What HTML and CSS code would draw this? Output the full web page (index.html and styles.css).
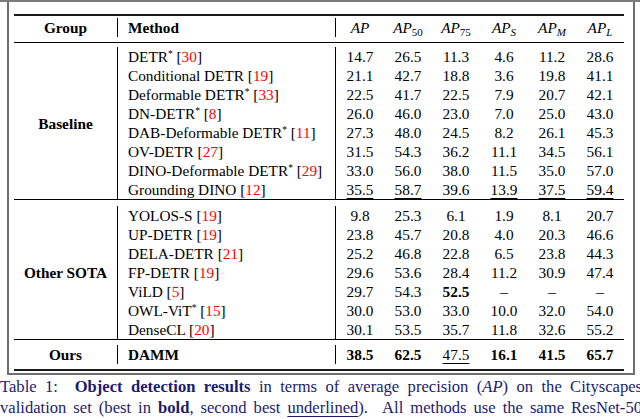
FILE: index.html
```html
<!DOCTYPE html>
<html>
<head>
<meta charset="utf-8">
<link rel="stylesheet" href="styles.css">
</head>
<body>
<div class="topline"></div>
<div class="frame">
  <div class="tbl">
    <div class="rule thick"></div>
    <div class="sec head">
      <div class="grp g1">Group</div>
      <div class="meth">Method</div>
      <div class="vals">
        <span><i>AP</i></span>
        <span><i>AP</i><sub>50</sub></span>
        <span><i>AP</i><sub>75</sub></span>
        <span><i>AP</i><sub><i>S</i></sub></span>
        <span><i>AP</i><sub><i>M</i></sub></span>
        <span><i>AP</i><sub><i>L</i></sub></span>
      </div>
    </div>
    <div class="rule"></div>
    <div class="sec base">
      <div class="grp g8">Baseline</div>
      <div class="meth">DETR<sup>*</sup> [<span class="ref">30</span>]</div>
      <div class="vals"><span>14.7</span><span>26.5</span><span>11.3</span><span>4.6</span><span>11.2</span><span>28.6</span></div>
      <div class="meth">Conditional DETR [<span class="ref">19</span>]</div>
      <div class="vals"><span>21.1</span><span>42.7</span><span>18.8</span><span>3.6</span><span>19.8</span><span>41.1</span></div>
      <div class="meth">Deformable DETR<sup>*</sup> [<span class="ref">33</span>]</div>
      <div class="vals"><span>22.5</span><span>41.7</span><span>22.5</span><span>7.9</span><span>20.7</span><span>42.1</span></div>
      <div class="meth">DN-DETR<sup>*</sup> [<span class="ref">8</span>]</div>
      <div class="vals"><span>26.0</span><span>46.0</span><span>23.0</span><span>7.0</span><span>25.0</span><span>43.0</span></div>
      <div class="meth">DAB-Deformable DETR<sup>*</sup> [<span class="ref">11</span>]</div>
      <div class="vals"><span>27.3</span><span>48.0</span><span>24.5</span><span>8.2</span><span>26.1</span><span>45.3</span></div>
      <div class="meth">OV-DETR [<span class="ref">27</span>]</div>
      <div class="vals"><span>31.5</span><span>54.3</span><span>36.2</span><span>11.1</span><span>34.5</span><span>56.1</span></div>
      <div class="meth">DINO-Deformable DETR<sup>*</sup> [<span class="ref">29</span>]</div>
      <div class="vals"><span>33.0</span><span>56.0</span><span>38.0</span><span>11.5</span><span>35.0</span><span>57.0</span></div>
      <div class="meth">Grounding DINO [<span class="ref">12</span>]</div>
      <div class="vals"><span><u>35.5</u></span><span><u>58.7</u></span><span>39.6</span><span><u>13.9</u></span><span><u>37.5</u></span><span><u>59.4</u></span></div>
    </div>
    <div class="rule"></div>
    <div class="sec other">
      <div class="grp g7">Other SOTA</div>
      <div class="meth">YOLOS-S [<span class="ref">19</span>]</div>
      <div class="vals"><span>9.8</span><span>25.3</span><span>6.1</span><span>1.9</span><span>8.1</span><span>20.7</span></div>
      <div class="meth">UP-DETR [<span class="ref">19</span>]</div>
      <div class="vals"><span>23.8</span><span>45.7</span><span>20.8</span><span>4.0</span><span>20.3</span><span>46.6</span></div>
      <div class="meth">DELA-DETR [<span class="ref">21</span>]</div>
      <div class="vals"><span>25.2</span><span>46.8</span><span>22.8</span><span>6.5</span><span>23.8</span><span>44.3</span></div>
      <div class="meth">FP-DETR [<span class="ref">19</span>]</div>
      <div class="vals"><span>29.6</span><span>53.6</span><span>28.4</span><span>11.2</span><span>30.9</span><span>47.4</span></div>
      <div class="meth">ViLD [<span class="ref">5</span>]</div>
      <div class="vals"><span>29.7</span><span>54.3</span><span><b>52.5</b></span><span>–</span><span>–</span><span>–</span></div>
      <div class="meth">OWL-ViT<sup>*</sup> [<span class="ref">15</span>]</div>
      <div class="vals"><span>30.0</span><span>53.0</span><span>33.0</span><span>10.0</span><span>32.0</span><span>54.0</span></div>
      <div class="meth">DenseCL [<span class="ref">20</span>]</div>
      <div class="vals"><span>30.1</span><span>53.5</span><span>35.7</span><span>11.8</span><span>32.6</span><span>55.2</span></div>
    </div>
    <div class="rule"></div>
    <div class="sec ours">
      <div class="grp g1">Ours</div>
      <div class="meth"><b>DAMM</b></div>
      <div class="vals"><span><b>38.5</b></span><span><b>62.5</b></span><span><u>47.5</u></span><span><b>16.1</b></span><span><b>41.5</b></span><span><b>65.7</b></span></div>
    </div>
    <div class="rule thick"></div>
  </div>
</div>
<div class="cap">
  <div class="cl">Table 1: &nbsp;<b>Object detection results</b> in terms of average precision (<i>AP</i>) on the Cityscapes</div>
  <div class="cl">validation set (best in <b>bold</b>, second best <u>underlined</u>). &nbsp;All methods use the same ResNet-50</div>
</div>
</body>
</html>
```
FILE: styles.css
```css
html, body {
  margin: 0;
  padding: 0;
  background: #fff;
}
body {
  width: 640px;
  height: 419px;
  overflow: hidden;
  font-family: "Liberation Serif", "Times New Roman", serif;
  color: #000;
}
.topline {
  height: 2px;
  background: #7a7a7a;
}
.frame {
  margin-left: 7px;
  width: 624px;
  border: 2px solid #6e6e6e;
  border-top: none;
  padding: 12px 0 2px 0;
}
.tbl {
  margin-left: 5px;
  width: 610px;
  font-size: 15.3px;
}
.rule {
  height: 1px;
  background: #000;
}
.rule.thick {
  height: 2px;
  background: #1a1a1a;
}
.sec {
  display: grid;
  grid-template-columns: 103px 218px 289px;
  grid-auto-rows: 19px;
  padding: 4px 0 1px 0;
  line-height: 19px;
}
.sec.head {
  padding: 2px 0 5px 0;
  font-weight: bold;
}
.sec.base {
  padding: 4px 0 0 0;
}
.sec.other {
  padding: 6px 0 0 0;
}
.sec.ours {
  padding: 5px 0 5px 0;
}
.grp {
  grid-column: 1;
  display: flex;
  align-items: center;
  justify-content: center;
  font-weight: bold;
}
.g1 { grid-row: span 1; }
.g7 { grid-row: span 7; }
.g8 { grid-row: span 8; }
.meth {
  grid-column: 2;
  border-left: 1px solid #000;
  padding-left: 10px;
  white-space: nowrap;
}
.vals {
  grid-column: 3;
  border-left: 1px solid #000;
  display: grid;
  grid-template-columns: repeat(6, 48px);
  text-align: center;
  font-weight: normal;
}
sup {
  font-size: 0.62em;
  vertical-align: 0.55em;
  line-height: 0;
}
sub {
  font-size: 0.72em;
  vertical-align: -0.28em;
  line-height: 0;
}
.ref {
  color: #ff0000;
}
u {
  text-decoration: underline;
  text-decoration-thickness: 1px;
  text-underline-offset: 3px;
}
.cap {
  width: 642px;
  margin-top: 1px;
  font-size: 16.6px;
  line-height: 21px;
  color: #1c1c6c;
}
.cl {
  text-align: justify;
  text-align-last: justify;
  white-space: nowrap;
}
```
